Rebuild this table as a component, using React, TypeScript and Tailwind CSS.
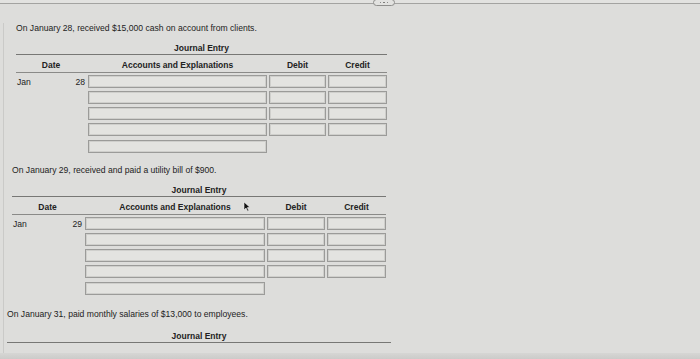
import React from 'react';

type Entry = {
    prompt: string;
    day?: string;
    indent: string;
    gap: string;
    cols?: string;
    width?: string;
};

const entries: Entry[] = [
    {
        prompt: 'On January 28, received $15,000 cash on account from clients.',
        day: '28',
        indent: 'ml-[12px]',
        gap: 'mt-[19px]',
        cols: 'grid grid-cols-[70px_179px_57px_59px] gap-x-[2px]',
        width: 'w-[371px]',
    },
    {
        prompt: 'On January 29, received and paid a utility bill of $900.',
        day: '29',
        indent: 'ml-[8px]',
        gap: 'mt-[12px]',
        cols: 'grid grid-cols-[71px_180px_58px_59px] gap-x-[2px]',
        width: 'w-[374px]',
    },
    { prompt: 'On January 31, paid monthly salaries of $13,000 to employees.', indent: 'ml-[3px]', gap: 'mt-[14px]', width: 'w-[384px]' },
];

const field = 'h-[13px] border border-[#9b9b99] bg-[#e3e3e0] shadow-[inset_0_0_0_1px_#cfcfcc]';

function Cursor() {
    return (
        <svg className="absolute left-[243px] top-[201px]" width="8" height="11" viewBox="0 0 8 11">
            <path d="M1 1 L1 9 L3 7 L4.6 10.2 L5.8 9.6 L4.3 6.6 L7 6.4 Z" fill="#111" stroke="#f2f2f2" strokeWidth="0.6" />
        </svg>
    );
}

function JournalBlock({ entry }: { entry: Entry }) {
    return (
        <div className={`${entry.indent} ${entry.gap} ${entry.width}`}>
            <p className="h-[10px] text-[8.6px] leading-[10px] whitespace-nowrap">{entry.prompt}</p>

            {/* Journal entry title and rule */}
            <div
                className={`${entry.cols ? 'mt-[10px]' : 'mt-[12px]'} border-b border-[#777775] pb-[1px] text-center text-[8.5px] font-bold leading-[10px]`}
            >
                Journal Entry
            </div>

            {entry.cols && (
                <>
                    <div className={`${entry.cols} h-[18px] items-end border-b border-[#8a8a88] pb-[2px] text-center text-[8.5px] font-bold leading-[10px]`}>
                        <span>Date</span>
                        <span>Accounts and Explanations</span>
                        <span>Debit</span>
                        <span>Credit</span>
                    </div>

                    <div className={`${entry.cols} mt-[2px] gap-y-[3px]`}>
                        {[0, 1, 2, 3].map((i) => (
                            <React.Fragment key={i}>
                                <div className="flex h-[13px] items-center justify-between px-[1px] text-[8.6px] leading-[10px]">
                                    {i === 0 && (
                                        <>
                                            <span>Jan</span>
                                            <span>{entry.day}</span>
                                        </>
                                    )}
                                </div>
                                <div className={field} />
                                <div className={field} />
                                <div className={field} />
                            </React.Fragment>
                        ))}
                        <div />
                        <div className={`${field} mt-[1px]`} />
                    </div>
                </>
            )}
        </div>
    );
}

export default function App() {
    return (
        <div className="relative h-[359px] w-[700px] overflow-hidden bg-[#dddddb] font-['Liberation_Sans',Arial,sans-serif] text-[#222222]">
            {/* top toolbar rule with the collapsed menu pill */}
            <div className="relative h-[4px] border-b border-[#a3a3a1] bg-[#e2e2e0]">
                <div className="absolute left-[373px] top-[-1px] flex h-[7px] w-[22px] items-center justify-center gap-[2px] rounded-full border border-[#8e8e8c] bg-[#e2e2e0]">
                    <span className="h-[1.5px] w-[1.5px] rounded-full bg-[#6f6f6d]" />
                    <span className="h-[1.5px] w-[1.5px] rounded-full bg-[#6f6f6d]" />
                    <span className="h-[1.5px] w-[1.5px] rounded-full bg-[#6f6f6d]" />
                </div>
            </div>

            <div className="ml-[3px] border-l border-[#cacac8] pb-[20px]">
                {entries.map((entry, i) => (
                    <JournalBlock key={i} entry={entry} />
                ))}
            </div>

            <Cursor />

            {/* bottom edge */}
            <div className="absolute bottom-0 left-0 h-[6px] w-full bg-gradient-to-b from-[#d6d6d4] to-[#cbcbc9]" />
        </div>
    );
}
